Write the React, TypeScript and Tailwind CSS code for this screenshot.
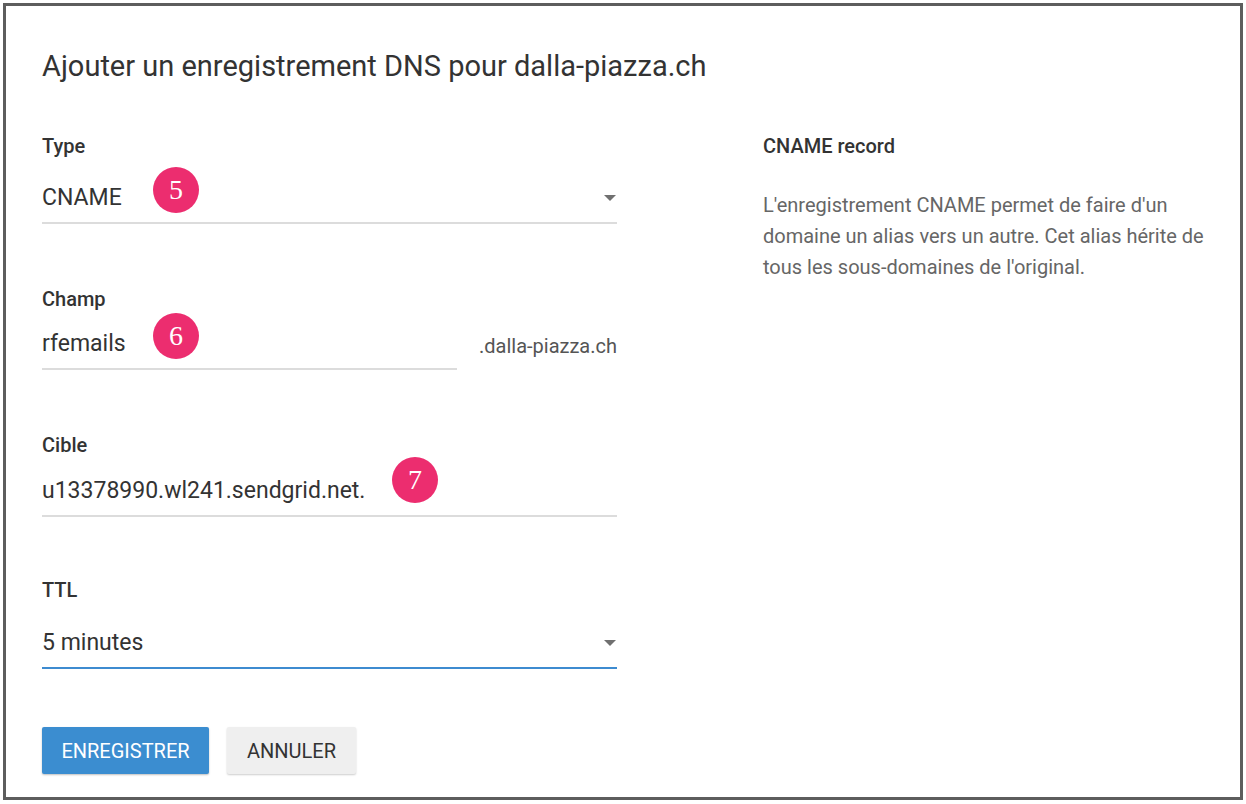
import React from 'react';

const Badge = ({ n, className }: { n: string; className: string }) => (
  <div
    className={`absolute w-[46px] h-[46px] rounded-full bg-[#ec2d6f] text-white flex items-center justify-center text-[28px] leading-none ${className}`}
    style={{ fontFamily: '"Liberation Serif", "DejaVu Serif", serif' }}
  >
    {n}
  </div>
);

const Caret = () => (
  <svg width="14" height="8" viewBox="0 0 14 8" className="mb-[11px]">
    <path d="M1 1 L13 1 L7 7 Z" fill="#707070" />
  </svg>
);

export default function App() {
  return (
    <div className="w-[1246px] h-[804px] bg-white overflow-hidden" style={{ fontFamily: 'Roboto, "Liberation Sans", sans-serif' }}>
      <div className="ml-[3px] mt-[3px] w-[1240px] h-[797px] border-[3px] border-[#5d5d5d] pl-[36px] pt-[43px]">
        <h1 className="text-[29px] leading-[34px] text-[#333] font-normal">
          Ajouter un enregistrement DNS pour dalla-piazza.ch
        </h1>

        <div className="flex mt-[51px]">
          {/* Form column */}
          <div className="w-[575px] flex flex-col">
            {/* Type */}
            <div>
              <div className="text-[20px] leading-[24px] font-medium text-[#333]">Type</div>
              <div className="relative h-[66px] flex items-end justify-between border-b-2 border-[#dcdcdc] pb-[9px]">
                <span className="text-[23px] leading-[30px] text-[#333]">CNAME</span>
                <Caret />
                <Badge n="5" className="left-[111px] bottom-[9px]" />
              </div>
            </div>

            {/* Champ */}
            <div className="mt-[63px]">
              <div className="text-[20px] leading-[24px] font-medium text-[#333]">Champ</div>
              <div className="flex items-end justify-between">
                <div className="relative w-[415px] h-[59px] flex items-end border-b-2 border-[#dcdcdc] pb-[9px]">
                  <span className="text-[23px] leading-[30px] text-[#333]">rfemails</span>
                  <Badge n="6" className="left-[111px] bottom-[9px]" />
                </div>
                <span className="text-[20px] leading-[30px] text-[#555] pb-[9px]">.dalla-piazza.ch</span>
              </div>
            </div>

            {/* Cible */}
            <div className="mt-[63px]">
              <div className="text-[20px] leading-[24px] font-medium text-[#333]">Cible</div>
              <div className="relative h-[60px] flex items-end border-b-2 border-[#dcdcdc] pb-[9px]">
                <span className="text-[23px] leading-[30px] text-[#333]">u13378990.wl241.sendgrid.net.</span>
                <Badge n="7" className="left-[350px] bottom-[12px]" />
              </div>
            </div>

            {/* TTL */}
            <div className="mt-[61px]">
              <div className="text-[20px] leading-[24px] font-medium text-[#333]">TTL</div>
              <div className="h-[67px] flex items-end justify-between border-b-2 border-[#3d8bd0] pb-[9px]">
                <span className="text-[23px] leading-[30px] text-[#333]">5 minutes</span>
                <Caret />
              </div>
            </div>

            <div className="flex gap-[18px] mt-[58px]">
              <button className="h-[47px] w-[167px] bg-[#3b8dd0] text-white text-[20px] rounded-[2px] shadow-[0_1px_2px_rgba(0,0,0,0.25)]">
                ENREGISTRER
              </button>
              <button className="h-[47px] w-[129px] bg-[#efefef] text-[#333] text-[20px] rounded-[2px] shadow-[0_1px_2px_rgba(0,0,0,0.2)]">
                ANNULER
              </button>
            </div>
          </div>

          {/* Help column */}
          <div className="ml-[146px] w-[460px]">
            <div className="text-[20px] leading-[24px] font-medium text-[#333]">CNAME record</div>
            <p className="mt-[32px] text-[20px] leading-[31px] text-[#666]">
              L'enregistrement CNAME permet de faire d'un domaine un alias vers un autre. Cet alias hérite de tous les sous-domaines de l'original.
            </p>
          </div>
        </div>
      </div>
    </div>
  );
}
